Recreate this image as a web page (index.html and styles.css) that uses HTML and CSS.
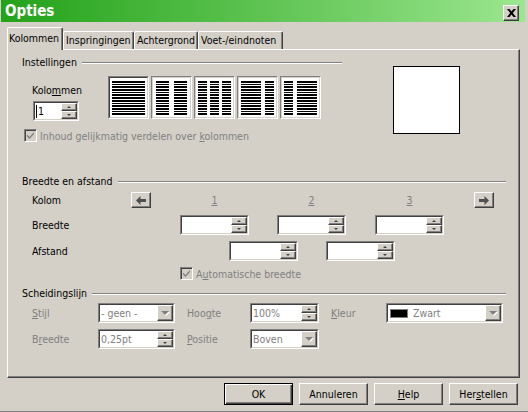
FILE: index.html
```html
<!DOCTYPE html>
<html>
<head>
<meta charset="utf-8">
<link rel="stylesheet" href="styles.css">
</head>
<body>
<div class="window">
  <div class="titlebar">
    <span class="title">Opties</span>
    <span class="close raised"><svg width="9" height="8" viewBox="0 0 9 8"><path d="M0 0h2.5L4.5 2.5 6.5 0H9L5.8 4 9 8H6.5L4.5 5.5 2.5 8H0l3.2-4z" fill="#000"/></svg></span>
  </div>
  <div class="tabs">
    <div class="tab active w55">Kolommen</div>
    <div class="tab w70">Inspringingen</div>
    <div class="tab w64">Achtergrond</div>
    <div class="tab w84">Voet-/eindnoten</div>
  </div>
  <div class="panel">
    <div class="g1">
      <div class="g1-main">
        <div class="group-head"><span>Instellingen</span><i class="line"></i></div>
        <div class="g1-row">
          <div class="kol">
            <div class="lbl">Kolo<u>m</u>men</div>
            <div class="sunken spin w46 ml1">
              <div class="sunken-in">
                <span class="val"><i class="caret"></i>1</span>
                <span class="spinbtns"><span class="sb raised"><i class="up"></i></span><span class="sb raised"><i class="down"></i></span></span>
              </div>
            </div>
          </div>
          <div class="colbtns">
            <div class="colbtn sel"><div class="colbtn-in"><i class="col c1"></i></div></div>
            <div class="colbtn"><div class="colbtn-in g5"><i class="col c1"></i><i class="col c1"></i></div></div>
            <div class="colbtn"><div class="colbtn-in"><i class="col c1"></i><i class="col c1"></i><i class="col c1"></i></div></div>
            <div class="colbtn"><div class="colbtn-in g4"><i class="col c2"></i><i class="col c1"></i></div></div>
            <div class="colbtn"><div class="colbtn-in g4"><i class="col c1"></i><i class="col c2"></i></div></div>
          </div>
        </div>
        <div class="chk-row">
          <span class="chk"><svg width="9" height="9" viewBox="0 0 9 9"><path d="M1 3.5l2.5 2.5 4.5-5v2l-4.5 5L1 5.5z" fill="#808080"/></svg></span>
          <span class="dis">Inhoud gelijkmatig verdelen over <u>k</u>olommen</span>
        </div>
      </div>
      <div class="preview"></div>
    </div>

    <div class="group g2">
      <div class="group-head"><span>Breedte en afstand</span><i class="line"></i></div>
      <div class="row r-kolom">
        <span class="lbl-cell w99">Kolom</span>
        <span class="arrowbtn raised"><svg width="10" height="9" viewBox="0 0 10 9"><path d="M0 4.5L4.5 0v3H10v3H4.5v3z" fill="#505050"/></svg></span>
        <span class="num ml29"><u>1</u></span>
        <span class="num ml28"><u>2</u></span>
        <span class="num ml29"><u>3</u></span>
        <span class="arrowbtn raised ml30"><svg width="10" height="9" viewBox="0 0 10 9"><path d="M10 4.5L5.5 0v3H0v3h5.5v3z" fill="#505050"/></svg></span>
      </div>
      <div class="row r-breedte">
        <span class="lbl-cell w148">Breedte</span>
        <div class="sunken spin w69"><div class="sunken-in"><span class="val"></span><span class="spinbtns"><span class="sb raised"><i class="up"></i></span><span class="sb raised"><i class="down"></i></span></span></div></div>
        <div class="sunken spin w69 ml28"><div class="sunken-in"><span class="val"></span><span class="spinbtns"><span class="sb raised"><i class="up"></i></span><span class="sb raised"><i class="down"></i></span></span></div></div>
        <div class="sunken spin w69 ml29"><div class="sunken-in"><span class="val"></span><span class="spinbtns"><span class="sb raised"><i class="up"></i></span><span class="sb raised"><i class="down"></i></span></span></div></div>
      </div>
      <div class="row r-afstand">
        <span class="lbl-cell w197">Afstand</span>
        <div class="sunken spin w69"><div class="sunken-in"><span class="val"></span><span class="spinbtns"><span class="sb raised"><i class="up"></i></span><span class="sb raised"><i class="down"></i></span></span></div></div>
        <div class="sunken spin w69 ml28"><div class="sunken-in"><span class="val"></span><span class="spinbtns"><span class="sb raised"><i class="up"></i></span><span class="sb raised"><i class="down"></i></span></span></div></div>
      </div>
      <div class="chk-row r-auto">
        <span class="chk"><svg width="9" height="9" viewBox="0 0 9 9"><path d="M1 3.5l2.5 2.5 4.5-5v2l-4.5 5L1 5.5z" fill="#808080"/></svg></span>
        <span class="dis">A<u>u</u>tomatische breedte</span>
      </div>
    </div>

    <div class="group g3">
      <div class="group-head"><span>Scheidingslijn</span><i class="line"></i></div>
      <div class="row r-stijl">
        <span class="lbl-cell w66 dis"><u>S</u>tijl</span>
        <div class="sunken drop w77"><div class="sunken-in"><span class="val dis">- geen -</span><span class="dropbtn raised"><i class="tri"></i></span></div></div>
        <span class="lbl-cell w63 ml12 dis">Hoo<u>g</u>te</span>
        <div class="sunken spin w69"><div class="sunken-in"><span class="val dis">100%</span><span class="spinbtns"><span class="sb raised"><i class="up"></i></span><span class="sb raised"><i class="down"></i></span></span></div></div>
        <span class="lbl-cell lw55 ml12 dis"><u>K</u>leur</span>
        <div class="sunken drop w117"><div class="sunken-in"><span class="swatch"></span><span class="val dis">Zwart</span><span class="dropbtn raised"><i class="tri"></i></span></div></div>
      </div>
      <div class="row r-breedte2">
        <span class="lbl-cell w66 dis">B<u>r</u>eedte</span>
        <div class="sunken spin w77"><div class="sunken-in"><span class="val dis">0,25pt</span><span class="spinbtns"><span class="sb raised"><i class="up"></i></span><span class="sb raised"><i class="down"></i></span></span></div></div>
        <span class="lbl-cell w63 ml12 dis"><u>P</u>ositie</span>
        <div class="sunken drop w69"><div class="sunken-in"><span class="val dis">Boven</span><span class="dropbtn raised"><i class="tri"></i></span></div></div>
      </div>
    </div>
  </div>
  <div class="buttons">
    <span class="btn raised default">OK</span>
    <span class="btn raised">Annuleren</span>
    <span class="btn raised"><u>H</u>elp</span>
    <span class="btn raised">Her<u>s</u>tellen</span>
  </div>
</div>
</body>
</html>
```

FILE: styles.css
```css
* { box-sizing: border-box; }
html, body { margin: 0; padding: 0; }
body {
  width: 528px;
  height: 412px;
  overflow: hidden;
  background: #d4d0c8;
  font-family: "DejaVu Sans Condensed", "Liberation Sans", sans-serif;
  font-size: 10.5px;
  color: #000;
}
u { text-decoration: underline; text-underline-offset: 1px; }
.window {
  width: 528px;
  height: 412px;
  background: #d4d0c8;
  border-bottom: 1px solid #808080;
  display: flex;
  flex-direction: column;
}
.titlebar {
  height: 22px;
  margin: 0 3px 0 1px;
  background: linear-gradient(to right, #24a21a 0%, #5ec352 50%, #9ce68f 100%);
  display: flex;
  align-items: flex-start;
  justify-content: space-between;
  padding: 0 6px 0 4px;
}
.title {
  color: #fff;
  font-weight: bold;
  font-size: 15px;
  line-height: 23px;
}
.close {
  margin-top: 5px;
  width: 16px;
  height: 16px;
  display: flex;
  align-items: center;
  justify-content: center;
}
.raised {
  background: #d4d0c8;
  border: 1px solid;
  border-color: #fff #404040 #404040 #fff;
  box-shadow: inset -1px -1px #808080;
}

/* tabs */
.tabs {
  margin-top: 5px;
  height: 22px;
  display: flex;
  align-items: flex-end;
  padding-left: 7px;
  position: relative;
  z-index: 1;
}
.tab {
  height: 18px;
  line-height: 17px;
  padding-left: 2px;
  border-left: 1px solid #fff;
  border-top: 1px solid #fff;
  border-right: 1px solid #404040;
  box-shadow: inset -1px 0 #808080;
  border-radius: 2px 2px 0 0;
  background: #d4d0c8;
  white-space: nowrap;
}
.tab.active {
  height: 23px;
  margin-bottom: -1px;
  line-height: 21px;
  padding-left: 1px;
}
.w55 { width: 56px; }
.w70 { width: 71px; }
.w64 { width: 64px; }
.w84 { width: 85px; }

/* panel */
.panel {
  margin-left: 7px;
  width: 513px;
  height: 329px;
  border-left: 1px solid #fff;
  border-top: 1px solid #fff;
  border-right: 1px solid #404040;
  border-bottom: 1px solid #404040;
  box-shadow: inset -1px -1px #808080;
  padding: 6px 0 0 14px;
}
.group-head {
  display: flex;
  align-items: center;
  height: 13px;
  line-height: 13px;
}
.group-head .line {
  flex: 1;
  height: 2px;
  border-top: 1px solid #808080;
  border-bottom: 1px solid #fff;
  margin-left: 5px;
  margin-top: 1px;
}
.g1 { display: flex; }
.g1-main { width: 320px; }
.g1-row { display: flex; margin-top: 7px; }
.kol { margin-left: 10px; width: 76px; }
.kol .lbl { margin-top: 8px; line-height: 13px; }
.kol .spin { margin-top: 4px; }
.ml1 { margin-left: 1px; }
.colbtns { display: flex; gap: 2px; }
.colbtn {
  width: 41px;
  height: 43px;
  border: 1px solid;
  border-color: #808080 #fff #fff #808080;
}
.colbtn-in {
  height: 100%;
  border: 1px solid;
  border-color: #d4d0c8;
  background: #fff;
  display: flex;
  gap: 3px;
  padding: 3px 2px;
}
.colbtn-in.g5 { gap: 5px; padding: 3px 3px; }
.colbtn-in.g4 { gap: 4px; }
.colbtn.sel .colbtn-in { border-color: #404040 #d4d0c8 #d4d0c8 #404040; }
.col {
  display: block;
  background: repeating-linear-gradient(to bottom, #000 0 1.7px, #fff 1.7px 2.7px);
  height: 34px;
}
.col.c1 { flex: 1; }
.col.c2 { flex: 2.3; }
.chk-row {
  display: flex;
  align-items: center;
  height: 13px;
  margin-top: 8px;
  margin-left: 2px;
}
.chk {
  width: 13px;
  height: 13px;
  border: 1px solid;
  border-color: #808080 #fff #fff #808080;
  box-shadow: inset 1px 1px #404040, inset -1px -1px #d4d0c8;
  background: #d4d0c8;
  display: flex;
  align-items: center;
  justify-content: center;
  margin-right: 3px;
  flex: none;
}
.dis { color: #808080; }
.preview {
  margin-left: 51px;
  margin-top: 10px;
  width: 67px;
  height: 68px;
  background: #fff;
  border: 1px solid #000;
}

/* groups */
.group { width: 484px; }
.g2 { margin-top: 33px; }
.row {
  display: flex;
  align-items: center;
  padding-left: 10px;
}
.r-kolom { margin-top: 4px; height: 16px; }
.r-breedte { margin-top: 7px; height: 20px; }
.r-afstand { margin-top: 6px; height: 20px; }
.r-auto { margin-top: 6px; margin-left: 158px; }
.g3 { margin-top: 7px; }
.r-stijl { margin-top: 3px; height: 20px; }
.r-breedte2 { margin-top: 6px; height: 20px; }
.lbl-cell { flex: none; white-space: nowrap; }
.w99 { width: 99px; }
.w148 { width: 148px; }
.w197 { width: 197px; }
.w66 { width: 66px; }
.w63 { width: 63px; }
.lw55 { width: 55px; }
.ml12 { margin-left: 12px; }
.ml28 { margin-left: 28px; }
.ml29 { margin-left: 29px; }
.ml30 { margin-left: 30px; }
.arrowbtn {
  width: 20px;
  height: 16px;
  display: flex;
  align-items: center;
  justify-content: center;
  flex: none;
}
.num {
  width: 69px;
  text-align: center;
  color: #808080;
  flex: none;
}

/* inputs */
.sunken {
  height: 20px;
  border: 1px solid;
  border-color: #808080 #fff #fff #808080;
  flex: none;
}
.sunken-in {
  height: 100%;
  border: 1px solid;
  border-color: #404040 #d4d0c8 #d4d0c8 #404040;
  background: #fff;
  display: flex;
  align-items: stretch;
}
.w46 { width: 46px; }
.w69 { width: 69px; }
.w77 { width: 77px; }
.w117 { width: 117px; }
.val {
  flex: 1;
  display: flex;
  align-items: center;
  padding-left: 1px;
  white-space: nowrap;
  overflow: hidden;
}
.caret {
  display: block;
  width: 1px;
  height: 13px;
  background: #000;
  margin-right: 1px;
}
.spinbtns {
  width: 16px;
  display: flex;
  flex-direction: column;
}
.sb {
  flex: 1;
  display: flex;
  align-items: center;
  justify-content: center;
}
.up, .down {
  display: block;
  width: 0;
  height: 0;
  border-left: 2px solid transparent;
  border-right: 2px solid transparent;
}
.up { border-bottom: 2px solid #404040; }
.down { border-top: 2px solid #404040; }
.dropbtn {
  width: 16px;
  display: flex;
  align-items: center;
  justify-content: center;
}
.tri {
  display: block;
  width: 0;
  height: 0;
  border-left: 4px solid transparent;
  border-right: 4px solid transparent;
  border-top: 4px solid #808080;
  filter: drop-shadow(1px 1px 0 #fff);
}
.swatch {
  width: 18px;
  height: 9px;
  background: #000;
  border: 1px solid #808080;
  align-self: center;
  margin: 0 4px 0 2px;
  flex: none;
}

/* buttons */
.buttons {
  margin-top: 5px;
  display: flex;
  justify-content: flex-end;
  gap: 6px;
  padding-right: 10px;
}
.btn {
  width: 69px;
  height: 22px;
  display: flex;
  align-items: center;
  justify-content: center;
}
.btn.default {
  border-color: #000;
  box-shadow: inset 1px 1px #fff, inset -1px -1px #404040, inset -2px -2px #808080;
}
```
